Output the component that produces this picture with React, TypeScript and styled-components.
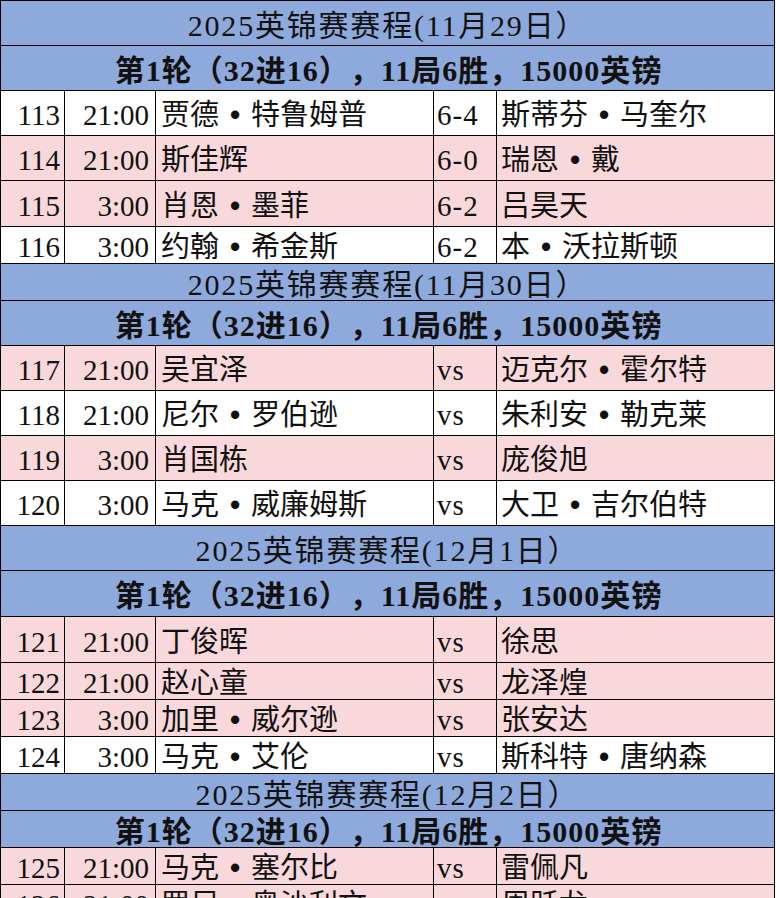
import styled, { createGlobalStyle } from "styled-components";

type Match = {
  no: number;
  time: string;
  home: string;
  score: string;
  away: string;
  pink: boolean;
  h: number;
};

type Day = {
  date: string;
  titleH: number;
  subH: number;
  matches: Match[];
};

const days: Day[] = [
  {
    date: "11月29日",
    titleH: 45,
    subH: 45,
    matches: [
      { no: 113, time: "21:00", home: "贾德•特鲁姆普", score: "6-4", away: "斯蒂芬•马奎尔", pink: false, h: 45 },
      { no: 114, time: "21:00", home: "斯佳辉", score: "6-0", away: "瑞恩•戴", pink: true, h: 45 },
      { no: 115, time: "3:00", home: "肖恩•墨菲", score: "6-2", away: "吕昊天", pink: true, h: 46 },
      { no: 116, time: "3:00", home: "约翰•希金斯", score: "6-2", away: "本•沃拉斯顿", pink: false, h: 37 },
    ],
  },
  {
    date: "11月30日",
    titleH: 37,
    subH: 45,
    matches: [
      { no: 117, time: "21:00", home: "吴宜泽", score: "vs", away: "迈克尔•霍尔特", pink: true, h: 45 },
      { no: 118, time: "21:00", home: "尼尔•罗伯逊", score: "vs", away: "朱利安•勒克莱", pink: false, h: 45 },
      { no: 119, time: "3:00", home: "肖国栋", score: "vs", away: "庞俊旭", pink: true, h: 45 },
      { no: 120, time: "3:00", home: "马克•威廉姆斯", score: "vs", away: "大卫•吉尔伯特", pink: false, h: 45 },
    ],
  },
  {
    date: "12月1日",
    titleH: 45,
    subH: 46,
    matches: [
      { no: 121, time: "21:00", home: "丁俊晖", score: "vs", away: "徐思", pink: true, h: 46 },
      { no: 122, time: "21:00", home: "赵心童", score: "vs", away: "龙泽煌", pink: true, h: 37 },
      { no: 123, time: "3:00", home: "加里•威尔逊", score: "vs", away: "张安达", pink: true, h: 37 },
      { no: 124, time: "3:00", home: "马克•艾伦", score: "vs", away: "斯科特•唐纳森", pink: false, h: 37 },
    ],
  },
  {
    date: "12月2日",
    titleH: 37,
    subH: 37,
    matches: [
      { no: 125, time: "21:00", home: "马克•塞尔比", score: "vs", away: "雷佩凡", pink: true, h: 37 },
      { no: 126, time: "21:00", home: "罗尼•奥沙利文", score: "vs", away: "周跃龙", pink: true, h: 37 },
    ],
  },
];

const GlobalStyle = createGlobalStyle`
  html, body {
    margin: 0;
    padding: 0;
    background: #ffffff;
    overflow: hidden;
  }
`;

const Sheet = styled.div`
  width: 775px;
  box-sizing: border-box;
  border-top: 1px solid #000;
  border-left: 1px solid #000;
  font-family: "Liberation Serif", "Noto Sans CJK SC", serif;
  font-size: 29px;
  color: #111;
  text-spacing-trim: space-all;
`;

const Banner = styled.div<{ $h: number; $bold?: boolean }>`
  height: ${(p) => p.$h}px;
  box-sizing: border-box;
  border-right: 1px solid #000;
  border-bottom: 1px solid #000;
  background: #8ea9db;
  display: flex;
  align-items: center;
  justify-content: center;
  padding-top: 5px;
  padding-left: ${(p) => (p.$bold ? 2 : 0)}px;
  line-height: 1;
  font-size: 30px;
  letter-spacing: ${(p) => (p.$bold ? 1 : 1.8)}px;
  font-weight: ${(p) => (p.$bold ? 700 : 400)};
  white-space: nowrap;
`;

const Row = styled.div<{ $h: number; $pink: boolean }>`
  height: ${(p) => p.$h}px;
  display: grid;
  grid-template-columns: 64px 91px 278px 63px 278px;
  background: ${(p) => (p.$pink ? "#f9d8dc" : "#ffffff")};
`;

const Cell = styled.div<{ $align?: "left" | "right"; $pad?: number }>`
  box-sizing: border-box;
  border-right: 1px solid #000;
  border-bottom: 1px solid #000;
  display: flex;
  align-items: center;
  justify-content: ${(p) => (p.$align === "right" ? "flex-end" : "flex-start")};
  padding-top: 5px;
  padding-left: ${(p) => (p.$align === "right" ? 0 : p.$pad ?? 4)}px;
  padding-right: ${(p) => (p.$align === "right" ? p.$pad ?? 4 : 0)}px;
  line-height: 1;
  white-space: nowrap;
  overflow: hidden;
`;

const Dot = styled.span`
  display: inline-block;
  width: 1em;
  text-align: center;
  font-family: "Liberation Sans", sans-serif;
  font-weight: 700;
  margin: 0 0.05em;
`;

const Score = styled.span`
  letter-spacing: 1px;
`;

function Name({ text }: { text: string }) {
  const parts = text.split("•");
  return (
    <span>
      {parts.map((p, i) => (
        <span key={i}>
          {i > 0 && <Dot>•</Dot>}
          {p}
        </span>
      ))}
    </span>
  );
}

export default function App() {
  return (
    <>
      <GlobalStyle />
      <Sheet>
        {days.map((d) => (
          <div key={d.date}>
            <Banner $h={d.titleH}>2025英锦赛赛程({d.date}）</Banner>
            <Banner $h={d.subH} $bold>
              第1轮（32进16），11局6胜，15000英镑
            </Banner>
            {d.matches.map((m) => (
              <Row key={m.no} $h={m.h} $pink={m.pink}>
                <Cell $align="right" $pad={4}>{m.no}</Cell>
                <Cell $align="right" $pad={6}>{m.time}</Cell>
                <Cell $pad={5}>
                  <Name text={m.home} />
                </Cell>
                <Cell $pad={3}>
                  <Score>{m.score}</Score>
                </Cell>
                <Cell $pad={4}>
                  <Name text={m.away} />
                </Cell>
              </Row>
            ))}
          </div>
        ))}
      </Sheet>
    </>
  );
}
